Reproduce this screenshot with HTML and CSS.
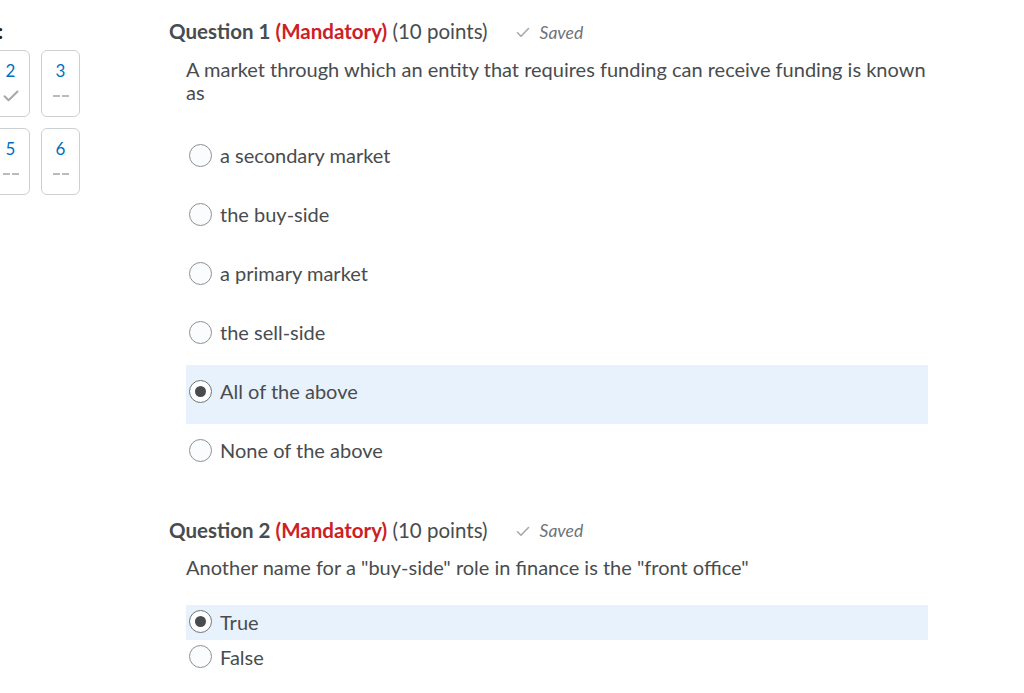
FILE: index.html
```html
<!DOCTYPE html>
<html lang="en">
<head>
<meta charset="utf-8">
<title>Quiz</title>
<link rel="stylesheet" href="styles.css">
</head>
<body>
<div class="page">
  <aside class="sidebar">
    <div class="side-title">:</div>
    <div class="cards">
      <div class="card"><span class="num">2</span><span class="status"><svg width="16" height="12" viewBox="0 0 16 12"><path d="M1.5 6.2 L5.6 10.3 L14.5 1.5" fill="none" stroke="#a6a9ac" stroke-width="2" stroke-linecap="round" stroke-linejoin="round"/></svg></span></div>
      <div class="card"><span class="num">3</span><span class="status"><span class="dash"></span><span class="dash"></span></span></div>
      <div class="card"><span class="num">5</span><span class="status"><span class="dash"></span><span class="dash"></span></span></div>
      <div class="card"><span class="num">6</span><span class="status"><span class="dash"></span><span class="dash"></span></span></div>
    </div>
  </aside>
  <main class="main">
    <section class="question">
      <h2 class="q-head"><span class="q-title">Question 1</span> <span class="q-mand">(Mandatory)</span> <span class="q-pts">(10 points)</span><span class="saved"><svg width="14" height="11" viewBox="0 0 14 11"><path d="M1.5 5.8 L5 9.2 L12.5 1.5" fill="none" stroke="#a6a9ac" stroke-width="1.6" stroke-linecap="round" stroke-linejoin="round"/></svg><em>Saved</em></span></h2>
      <p class="q-text">A market through which an entity that requires funding can receive funding is known as</p>
      <div class="options tall">
        <label class="opt"><span class="radio"></span>a secondary market</label>
        <label class="opt"><span class="radio"></span>the buy-side</label>
        <label class="opt"><span class="radio"></span>a primary market</label>
        <label class="opt"><span class="radio"></span>the sell-side</label>
        <label class="opt sel"><span class="radio on"></span>All of the above</label>
        <label class="opt"><span class="radio"></span>None of the above</label>
      </div>
    </section>
    <section class="question q2">
      <h2 class="q-head"><span class="q-title">Question 2</span> <span class="q-mand">(Mandatory)</span> <span class="q-pts">(10 points)</span><span class="saved"><svg width="14" height="11" viewBox="0 0 14 11"><path d="M1.5 5.8 L5 9.2 L12.5 1.5" fill="none" stroke="#a6a9ac" stroke-width="1.6" stroke-linecap="round" stroke-linejoin="round"/></svg><em>Saved</em></span></h2>
      <p class="q-text">Another name for a "buy-side" role in finance is the "front office"</p>
      <div class="options short">
        <label class="opt sel"><span class="radio on"></span>True</label>
        <label class="opt"><span class="radio"></span>False</label>
      </div>
    </section>
  </main>
</div>
</body>
</html>
```

FILE: styles.css
```css
html, body {
  margin: 0;
  padding: 0;
  background: #ffffff;
}
body {
  font-family: Lato, "Open Sans", "Liberation Sans", sans-serif;
  color: #494c4e;
  overflow: hidden;
  height: 693px;
}
.page {
  display: flex;
  align-items: flex-start;
}
.sidebar {
  width: 169px;
  flex: none;
}
.side-title {
  font-size: 20px;
  line-height: 24px;
  font-weight: 700;
  color: #202122;
  padding-top: 19px;
  margin-left: -2px;
  height: 31px;
}
.cards {
  display: grid;
  grid-template-columns: 39px 39px;
  column-gap: 11px;
  row-gap: 11px;
  margin-left: -9px;
}
.card {
  box-sizing: border-box;
  height: 67px;
  border: 1px solid #cdd0d3;
  border-radius: 6px;
  display: flex;
  flex-direction: column;
  align-items: center;
  padding-top: 10px;
}
.num {
  font-size: 17px;
  line-height: 20px;
  color: #006fbf;
}
.status {
  margin-top: 8px;
  height: 14px;
  display: flex;
  align-items: center;
  justify-content: center;
  gap: 2px;
}
.dash {
  width: 7px;
  height: 2px;
  background: #b9bcbf;
}
.main {
  width: 759px;
  flex: none;
  padding-top: 19px;
}
.q-head {
  margin: 0;
  font-size: 20.5px;
  line-height: 24px;
  font-weight: 400;
  color: #494c4e;
  white-space: nowrap;
}
.q-title {
  font-weight: 700;
}
.q-mand {
  font-weight: 700;
  color: #cd2026;
}
.saved {
  display: inline-flex;
  align-items: center;
  margin-left: 28px;
  gap: 10px;
  color: #6e7376;
  font-size: 17.5px;
  vertical-align: 1px;
}
.saved em {
  font-style: italic;
}
.q-text {
  margin: 13px 0 0 17px;
  font-size: 20px;
  line-height: 23px;
  width: 742px;
}
.options {
  margin-left: 17px;
  width: 742px;
  display: flex;
  flex-direction: column;
}
.options.tall {
  margin-top: 25px;
}
.options.short {
  margin-top: 26px;
}
.opt {
  box-sizing: border-box;
  display: flex;
  align-items: center;
  gap: 8px;
  padding-left: 3px;
  font-size: 20px;
  color: #494c4e;
}
.tall .opt {
  height: 59px;
  padding-bottom: 6px;
}
.short .opt {
  height: 35px;
  padding-bottom: 2px;
}
.opt.sel {
  background: #e8f2fc;
}
.radio {
  box-sizing: border-box;
  width: 23px;
  height: 23px;
  border-radius: 50%;
  border: 1px solid #8d9092;
  background: #fbfcfe;
  display: flex;
  align-items: center;
  justify-content: center;
  flex: none;
}
.radio.on {
  border-color: #6e7376;
  background: #ffffff;
}
.radio.on::after {
  content: "";
  width: 11px;
  height: 11px;
  border-radius: 50%;
  background: #494c4e;
}
.q2 {
  margin-top: 35px;
}
```
